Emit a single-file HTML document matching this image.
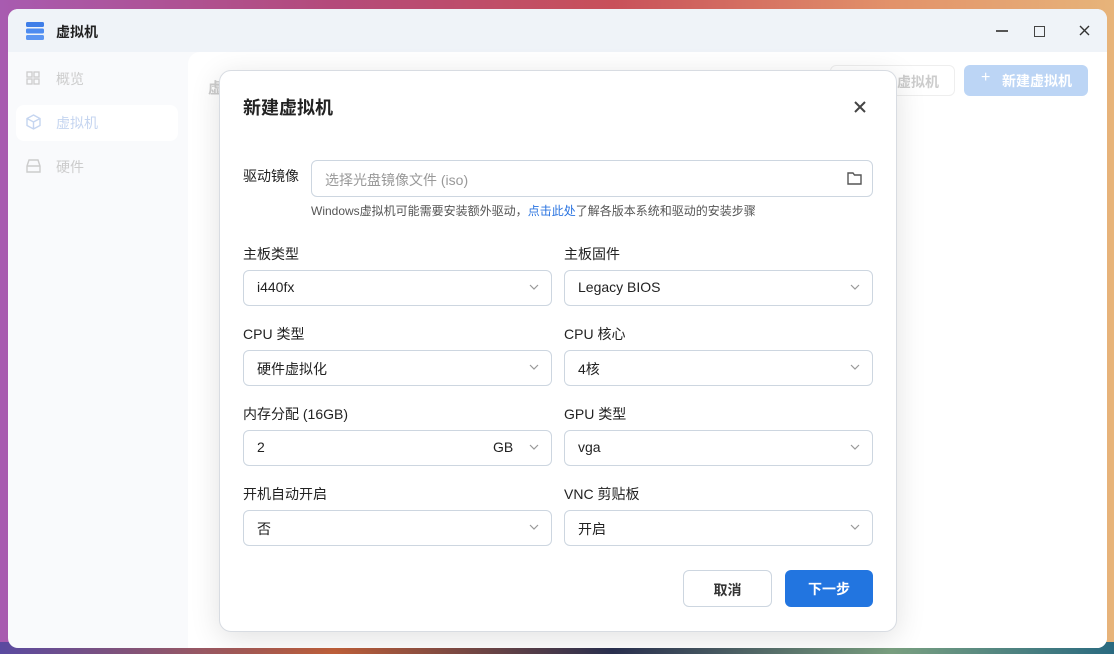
<!DOCTYPE html>
<html><head><meta charset="utf-8"><style>
*{box-sizing:border-box;margin:0;padding:0}
body{width:1114px;height:654px;overflow:hidden;position:relative;font-family:"Liberation Sans","Noto Sans CJK SC",sans-serif;
background:linear-gradient(90deg,#a85bb0 0%,#b44a7a 30%,#c8505a 55%,#e2926a 80%,#e7b47a 100%);}
.bot{position:absolute;left:0;right:0;bottom:0;height:12px;background:linear-gradient(90deg,#5a4aa0,#c0603a 30%,#2a3050 55%,#7aa080 80%,#2a6a80)}
.win{position:absolute;left:8px;top:9px;width:1099px;height:639px;background:#f9fafc;border-radius:10px;overflow:hidden}
.tb{position:absolute;left:0;top:0;right:0;height:43px;background:#eff3f8}
.tb .t{position:absolute;left:48px;top:13px;font-size:14px;font-weight:bold;color:#222}
.it{position:absolute;left:8px;width:162px;height:36px;border-radius:8px;font-size:14px;color:#ccc;padding:8px 0 0 40px}
.main{position:absolute;left:180px;top:43px;right:0;bottom:0;background:#fff;border-top-left-radius:12px}
.dlg{position:absolute;left:219px;top:70px;width:678px;height:562px;background:#fff;border:1px solid #d8dce2;border-radius:12px;box-shadow:0 6px 30px rgba(0,0,0,.12)}
.lbl{position:absolute;font-size:14px;color:#222}
.in{position:absolute;width:309px;height:36px;border:1px solid #cdd6e0;border-radius:6px;font-size:14px;color:#222;padding:8px 0 0 13px}
.in svg.c{position:absolute;right:12px;top:13px}
.btn{position:absolute;height:37px;border-radius:6px;font-size:14px;font-weight:bold;text-align:center;padding-top:9px}
</style></head><body>
<div class="bot"></div>
<div class="win">
 <div class="tb">
  <svg style="position:absolute;left:17px;top:12px" width="20" height="20" viewBox="0 0 20 20"><rect x="1" y="1" width="18" height="5" rx="1.5" fill="#3f7ee8"/><rect x="1" y="7.5" width="18" height="5" rx="1.5" fill="#4d8bf0"/><rect x="1" y="14" width="18" height="5" rx="1.5" fill="#5b95f2"/></svg>
  <div class="t">虚拟机</div>
  <div style="position:absolute;left:988px;top:21px;width:12px;height:2px;background:#555"></div>
  <div style="position:absolute;left:1026px;top:17px;width:11px;height:11px;border:1.5px solid #444"></div>
  <svg style="position:absolute;left:1071px;top:16px" width="11" height="11" viewBox="0 0 11 11"><path d="M1 1L10 10M10 1L1 10" stroke="#333" stroke-width="1.4"/></svg>
 </div>
 <div class="it" style="top:52px;background:none"><svg style="position:absolute;left:10px;top:10px" width="14" height="14" viewBox="0 0 14 14" fill="none" stroke="#ccc" stroke-width="1.3"><rect x="1" y="1" width="5" height="5"/><rect x="8" y="1" width="5" height="5"/><rect x="1" y="8" width="5" height="5"/><rect x="8" y="8" width="5" height="5"/></svg>概览</div>
 <div class="it" style="top:96px;background:#fff;color:#c5d5f0"><svg style="position:absolute;left:10px;top:9px" width="15" height="16" viewBox="0 0 15 16" fill="none" stroke="#c5d5f0" stroke-width="1.4"><path d="M7.5 1L14 4.5V11.5L7.5 15L1 11.5V4.5Z M1 4.5L7.5 8L14 4.5 M7.5 8V15"/></svg>虚拟机</div>
 <div class="it" style="top:140px"><svg style="position:absolute;left:10px;top:10px" width="15" height="14" viewBox="0 0 15 14" fill="none" stroke="#ccc" stroke-width="1.4"><path d="M3 1H12L14 7V13H1V7Z M1 7H14"/></svg>硬件</div>
 <div class="main">
  <div style="position:absolute;left:20px;top:25px;font-size:15px;font-weight:bold;color:#ccc">虚</div>
  <div style="position:absolute;left:642px;top:13px;width:125px;height:31px;border:1px solid #eee;border-radius:6px;font-size:14px;font-weight:bold;color:#ccc;padding:6px 0 0 66px">虚拟机</div>
  <div style="position:absolute;left:776px;top:13px;width:124px;height:31px;background:#bcd5f5;border-radius:6px;font-size:14px;font-weight:bold;color:#fff;padding:6px 0 0 38px"><span style="position:absolute;left:17px;top:4px;font-weight:normal;font-size:16px">+</span>新建虚拟机</div>
 </div>
</div>
<div class="dlg">
 <div style="position:absolute;left:23px;top:23px;font-size:18px;font-weight:bold;color:#222">新建虚拟机</div>
 <svg style="position:absolute;left:634px;top:30px" width="12" height="12" viewBox="0 0 12 12"><path d="M1 1L11 11M11 1L1 11" stroke="#444" stroke-width="2"/></svg>
 <div class="lbl" style="left:23px;top:95px">驱动镜像</div>
 <div class="in" style="left:91px;top:89px;width:562px;height:37px;color:#999;padding-top:9px">选择光盘镜像文件 (iso)
  <svg style="position:absolute;right:10px;top:11px" width="15" height="13" viewBox="0 0 15 13" fill="none" stroke="#555" stroke-width="1.4"><path d="M1 1H6L7.5 3H14V12H1Z"/></svg></div>
 <div style="position:absolute;left:91px;top:131px;font-size:12px;color:#555">Windows虚拟机可能需要安装额外驱动，<span style="color:#2b74e0">点击此处</span>了解各版本系统和驱动的安装步骤</div>

 <div class="lbl" style="left:23px;top:173px">主板类型</div><div class="lbl" style="left:344px;top:173px">主板固件</div>
 <div class="in" style="left:23px;top:199px">i440fx<svg class="c" width="10" height="6" viewBox="0 0 10 6"><path d="M1 1L5 5L9 1" stroke="#999" fill="none" stroke-width="1.2"/></svg></div>
 <div class="in" style="left:344px;top:199px">Legacy BIOS<svg class="c" width="10" height="6" viewBox="0 0 10 6"><path d="M1 1L5 5L9 1" stroke="#999" fill="none" stroke-width="1.2"/></svg></div>

 <div class="lbl" style="left:23px;top:253px">CPU 类型</div><div class="lbl" style="left:344px;top:253px">CPU 核心</div>
 <div class="in" style="left:23px;top:279px">硬件虚拟化<svg class="c" width="10" height="6" viewBox="0 0 10 6"><path d="M1 1L5 5L9 1" stroke="#999" fill="none" stroke-width="1.2"/></svg></div>
 <div class="in" style="left:344px;top:279px">4核<svg class="c" width="10" height="6" viewBox="0 0 10 6"><path d="M1 1L5 5L9 1" stroke="#999" fill="none" stroke-width="1.2"/></svg></div>

 <div class="lbl" style="left:23px;top:333px">内存分配 (16GB)</div><div class="lbl" style="left:344px;top:333px">GPU 类型</div>
 <div class="in" style="left:23px;top:359px">2<span style="position:absolute;left:249px;top:8px">GB</span><svg class="c" width="10" height="6" viewBox="0 0 10 6"><path d="M1 1L5 5L9 1" stroke="#999" fill="none" stroke-width="1.2"/></svg></div>
 <div class="in" style="left:344px;top:359px">vga<svg class="c" width="10" height="6" viewBox="0 0 10 6"><path d="M1 1L5 5L9 1" stroke="#999" fill="none" stroke-width="1.2"/></svg></div>

 <div class="lbl" style="left:23px;top:413px">开机自动开启</div><div class="lbl" style="left:344px;top:413px">VNC 剪贴板</div>
 <div class="in" style="left:23px;top:439px">否<svg class="c" width="10" height="6" viewBox="0 0 10 6"><path d="M1 1L5 5L9 1" stroke="#999" fill="none" stroke-width="1.2"/></svg></div>
 <div class="in" style="left:344px;top:439px">开启<svg class="c" width="10" height="6" viewBox="0 0 10 6"><path d="M1 1L5 5L9 1" stroke="#999" fill="none" stroke-width="1.2"/></svg></div>

 <div class="btn" style="left:463px;top:499px;width:89px;border:1px solid #cdd6e0;color:#333">取消</div>
 <div class="btn" style="left:565px;top:499px;width:88px;background:#2275e0;color:#fff">下一步</div>
</div>
</body></html>
